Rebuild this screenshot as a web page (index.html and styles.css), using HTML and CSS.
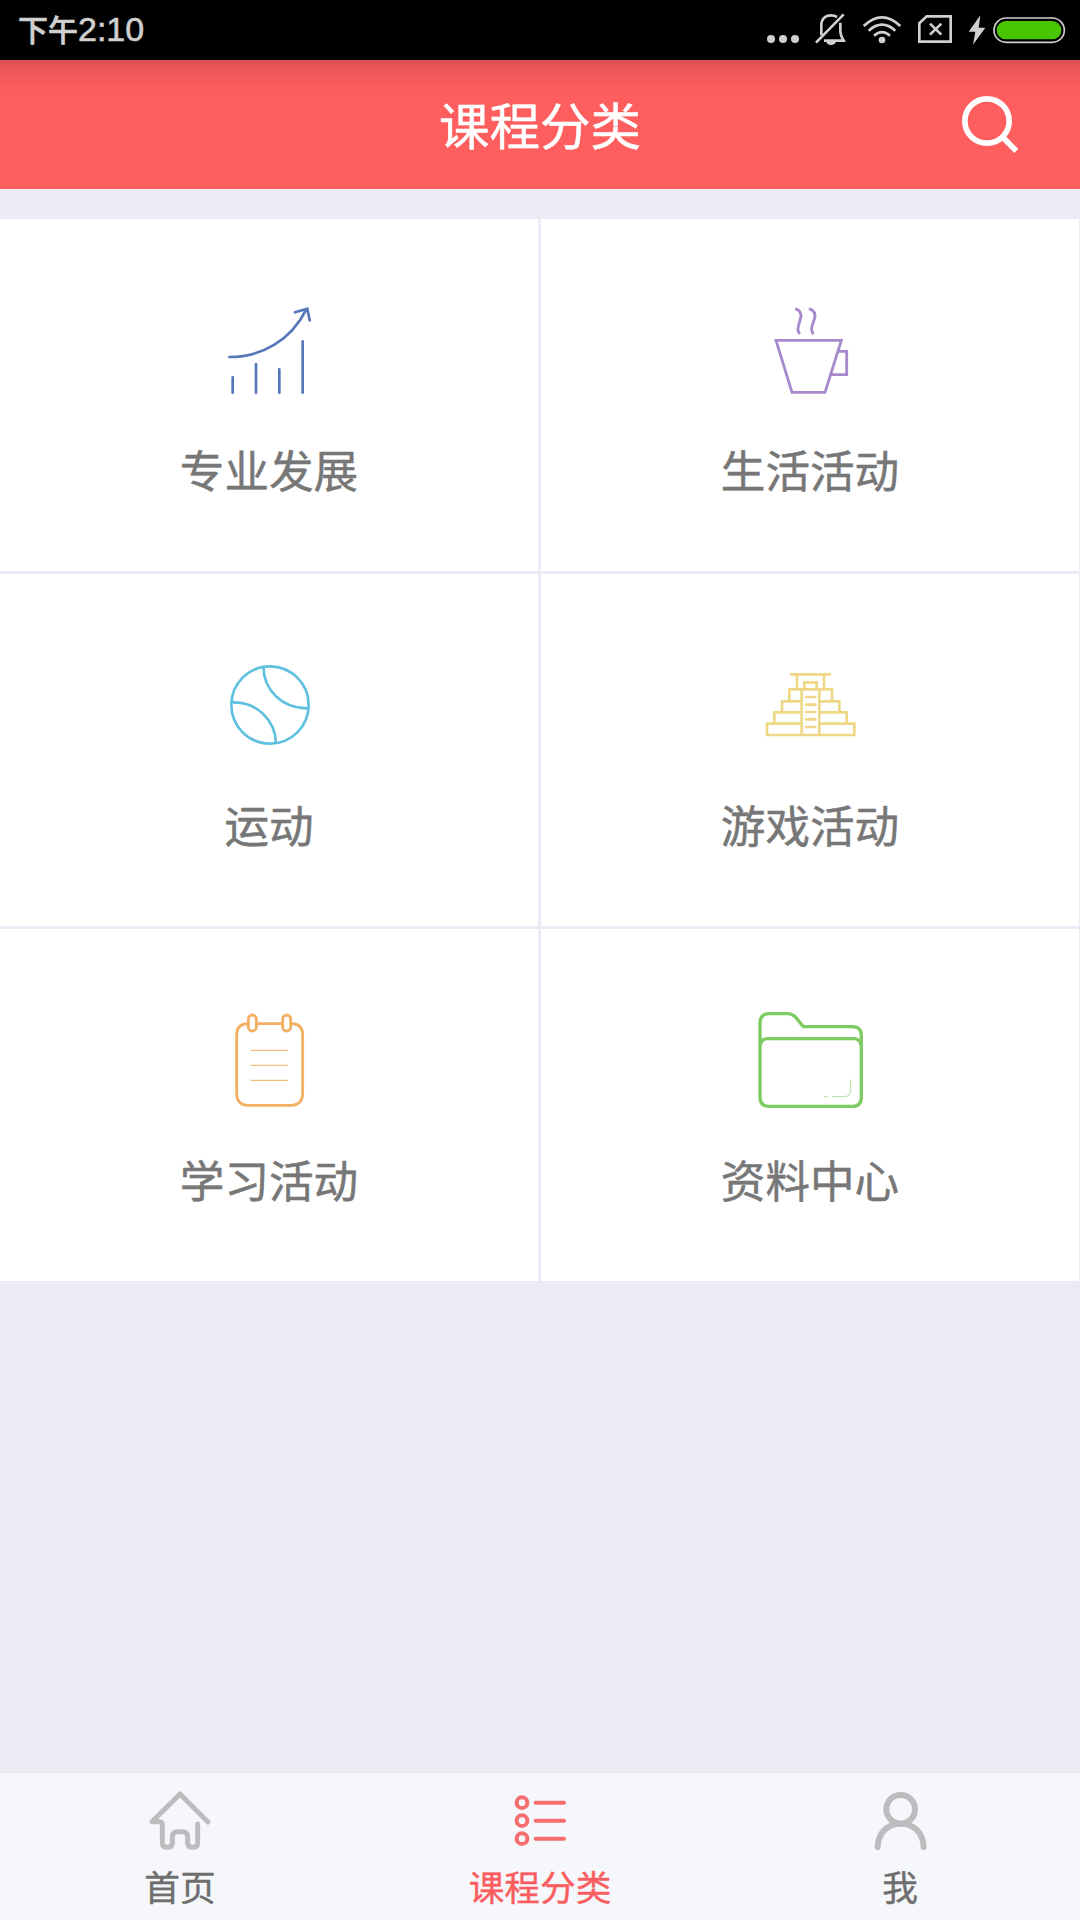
FILE: index.html
```html
<!DOCTYPE html>
<html lang="zh-CN">
<head>
<meta charset="utf-8">
<title>课程分类</title>
<link rel="stylesheet" href="styles.css">
</head>
<body>
<div class="screen">
  <div class="status">
    <div class="time"><span class="period">下午</span><span>2:10</span></div>
    <div class="indicators">
      <svg class="dots" viewBox="42 0 114 180"><circle cx="63" cy="117" r="12"/><circle cx="99" cy="117" r="12"/><circle cx="135" cy="117" r="12"/></svg>
      <svg class="bell" viewBox="189 0 102 180">
        <g class="line"><path d="M214 106V76C214 57 226 46 243 46Q253 46 261 51"/><path d="M271 68V92Q271 105 281 122H222"/><path d="M198 128L281 43"/></g>
        <path d="M229 126H258Q254 135 243 135T229 126Z"/>
      </svg>
      <svg class="wifi" viewBox="336 0 120 180">
        <g class="line"><path d="M341 78Q396 26 451 78"/><path d="M356 92Q396 56 436 92"/><path d="M372 107Q396 86 420 107"/></g>
        <circle cx="396" cy="120" r="10"/>
      </svg>
      <svg class="sim" viewBox="501 0 108 180"><g class="line"><path d="M530 49H602V125H508V70Z"/><path d="M540 71L574 104M574 71L540 104"/></g></svg>
      <svg class="bolt" viewBox="654 0 54 180"><path d="M691 46L656 95H676L669 134L706 83H686Z"/></svg>
      <svg class="battery" viewBox="726 0 222 180"><rect class="shell" x="732" y="54" width="211" height="73" rx="36.5"/><rect class="charge" x="740" y="63" width="194" height="55" rx="27.5"/></svg>
    </div>
  </div>

  <header class="header">
    <h1 class="title">课程分类</h1>
    <svg class="search" viewBox="627 180 186 387"><circle cx="711" cy="363" r="66.5"/><path d="M757 410L799 453"/></svg>
  </header>

  <main class="grid">
    <a class="cell">
      <svg class="icon blue" viewBox="147 0 360 360"><path d="M208 201C307 201 393 150 439 58M405 67L442 56L449 91M218 262V308M288 222V308M358 238V308M428 154V308"/></svg>
      <span class="label">专业发展</span>
    </a>
    <a class="cell">
      <svg class="icon purple" viewBox="150 0 360 360"><path d="M228 151H424L375 307H276ZM414 184H440V254H393"/><path d="M286 56C300 61 305 72 302 84L295 109Q291 124 300 132M327 56C341 61 347 72 344 84L336 109Q332 124 341 132"/></svg>
      <span class="label">生活活动</span>
    </a>
    <a class="cell">
      <svg class="icon cyan" viewBox="147 15 360 360"><circle cx="330" cy="195" r="116"/><path d="M310 80C312 149 363 205 444 205M217 187C291 185 346 241 348 309"/></svg>
      <span class="label">运动</span>
    </a>
    <a class="cell">
      <svg class="icon gold" viewBox="150 15 360 360"><path d="M273 103H390M291 104V148M372 104V148M313 148V127H350V148M268 148H396V184H418V217H440V251H463V285H201V251H223V217H246V184H268ZM305 148V285M358 148V285M268 184H305M358 184H396M246 217H305M358 217H418M223 251H305M358 251H440M318 171H346M318 194H346M318 216H346M318 238H346M318 261H346"/></svg>
      <span class="label">游戏活动</span>
    </a>
    <a class="cell">
      <svg class="icon orange" viewBox="147 30 360 360"><path d="M264 101Q230 101 230 136V309Q230 346 266 346H391Q428 346 428 309V136Q428 101 394 101M291 101H366"/><rect x="265" y="75" width="24" height="48" rx="12"/><rect x="368" y="75" width="24" height="48" rx="12"/><path class="thin" d="M272 181H384M272 226H384M272 271H384"/></svg>
      <span class="label">学习活动</span>
    </a>
    <a class="cell">
      <svg class="icon green" viewBox="150 30 360 360"><path d="M180 320V100Q180 71 207 71H263C287 71 293 93 311 110H457Q484 110 484 137V320Q484 349 457 349H207Q180 349 180 320ZM181 166Q183 146 204 146H460Q481 146 483 166"/><path class="shine" d="M452 269V300Q452 320 432 320H397M383 320H372"/></svg>
      <span class="label">资料中心</span>
    </a>
  </main>

  <nav class="tabs">
    <a class="tab">
      <svg class="tab-icon" viewBox="120 39 240 270"><path d="M324 186L240 102L156 185H178Q187 185 187 194V249Q187 262 202 262Q217 262 217 249V231Q217 215 233 215H247Q263 215 263 231V249Q263 262 278 262Q293 262 293 249V192"/></svg>
      <span class="tab-label">首页</span>
    </a>
    <a class="tab active">
      <svg class="tab-icon list" viewBox="180 39 240 270"><circle cx="246" cy="128" r="16"/><circle cx="246" cy="182" r="16"/><circle cx="246" cy="236" r="16"/><path d="M287 128H372M287 182H372M287 236H372"/></svg>
      <span class="tab-label">课程分类</span>
    </a>
    <a class="tab">
      <svg class="tab-icon person" viewBox="120 39 240 270"><circle cx="242" cy="148" r="43"/><path d="M173 261C175 218 203 191 242 191S309 218 311 261"/></svg>
      <span class="tab-label">我</span>
    </a>
  </nav>
</div>
</body>
</html>
```
FILE: styles.css
```css
* { box-sizing: border-box; }
body { margin: 0; font-family: "Noto Sans CJK SC", sans-serif; }
svg { display: block; flex: none; }

.screen {
  width: 1080px;
  height: 1920px;
  display: flex;
  flex-direction: column;
  background: #ebebf5;
  overflow: hidden;
}

/* Status bar */
.status {
  height: 60px;
  flex: none;
  display: flex;
  justify-content: space-between;
  padding: 0 14px 0 18px;
  background: #000;
  color: #d0d0d0;
}
.time {
  display: flex;
  align-items: flex-start;
  font: 34px/58px "Liberation Sans", sans-serif;
  -webkit-text-stroke: .6px currentColor;
}
.period { font: 500 30px/56px "Noto Sans CJK SC", sans-serif; }
.indicators { display: flex; fill: #d0d0d0; }
.indicators svg { height: 60px; }
.line { fill: none; stroke: #d0d0d0; stroke-width: 8; }
.dots { width: 38px; margin-right: 11px; }
.bell { width: 34px; margin-right: 15px; }
.wifi { width: 40px; margin-right: 15px; }
.sim { width: 36px; margin-right: 15px; }
.bolt { width: 18px; margin-right: 6px; }
.battery { width: 74px; }
.shell { fill: none; stroke: #d0d0d0; stroke-width: 5; }
.charge { fill: #48c400; }

/* Title bar */
.header {
  height: 129px;
  flex: none;
  display: grid;
  grid-template-columns: 121px 1fr 62px;
  padding-right: 59px;
  background: linear-gradient(#dc5155 0, #f0585a 14px, #fb5c5d 26px, #ff5e5f 38px);
}
.title {
  grid-column: 2;
  margin: 0;
  font-size: 50.5px;
  font-weight: 400;
  line-height: 127px;
  text-align: center;
  color: #fff;
  -webkit-text-stroke: .5px currentColor;
}
.search { width: 62px; height: 129px; fill: none; stroke: #fff; stroke-width: 17; }

/* Category grid */
.grid {
  display: grid;
  grid-template-columns: 538px 538px;
  grid-auto-rows: 352px;
  gap: 3px;
  margin-top: 30px;
}
.cell {
  display: flex;
  flex-direction: column;
  align-items: center;
  padding-top: 71px;
  background: #fff;
}
.label {
  margin-top: 29px;
  font-size: 44.6px;
  line-height: 60px;
  color: #777;
  -webkit-text-stroke: .5px currentColor;
}
.icon {
  width: 120px;
  height: 120px;
  fill: none;
  stroke-width: 8;
}
.blue { stroke: #5677b9; stroke-linecap: round; }
.purple { stroke: #a889cd; stroke-width: 8.5; }
.cyan { stroke: #5fc0df; }
.gold { stroke: #eed787; stroke-width: 8; stroke-linecap: round; }
.orange { stroke: #f3b062; stroke-width: 8.5; }
.green { stroke: #7dcb62; stroke-width: 10; }
.thin { stroke-width: 3; }
.shine { stroke-width: 3; opacity: .6; }

/* Bottom tabs */
.tabs {
  height: 147px;
  flex: none;
  display: grid;
  grid-template-columns: repeat(3, 1fr);
  margin-top: auto;
  background: #f6f7fb;
}
.tab {
  display: flex;
  flex-direction: column;
  align-items: center;
  color: #6e6e6e;
}
.tab-label {
  font-size: 35.7px;
  line-height: 46px;
  -webkit-text-stroke: .4px currentColor;
}
.tab-icon {
  width: 80px;
  height: 90px;
  fill: none;
  stroke: #bcbdbf;
  stroke-width: 15;
  stroke-linecap: round;
  stroke-linejoin: round;
}
.active { color: #f95d5f; }
.list { stroke: #f66d6f; stroke-width: 12; }
.person { stroke-width: 18; }
```
